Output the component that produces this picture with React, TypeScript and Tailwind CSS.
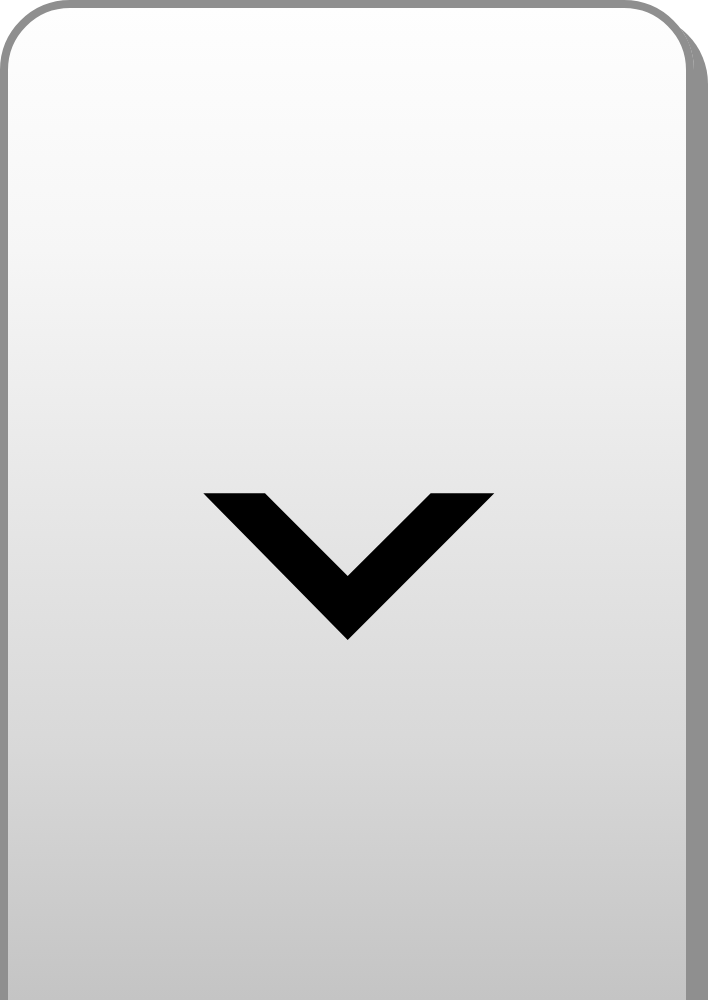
import React from "react";

export default function App() {
  return (
    <div className="w-[708px] h-[1000px] overflow-hidden bg-white">
      <div className="w-[694px] h-[1132px] rounded-[70px] border-8 border-[#8f8f8f] shadow-[14px_14px_0_#8f8f8f] bg-[linear-gradient(to_bottom,#fefefe_0px,#f6f6f6_242px,#d8d8d8_742px,#c4c4c4_992px,#b8b8b8_1116px)] flex items-center justify-center">
        <svg width="292" height="148" viewBox="203 493 292 148" className="block ml-[4px] mt-[2px]">
          <polygon points="203.3,493.3 265,493.3 347.7,576 430.7,493.3 494.3,493.3 347.7,640" fill="#000" />
        </svg>
      </div>
    </div>
  );
}
